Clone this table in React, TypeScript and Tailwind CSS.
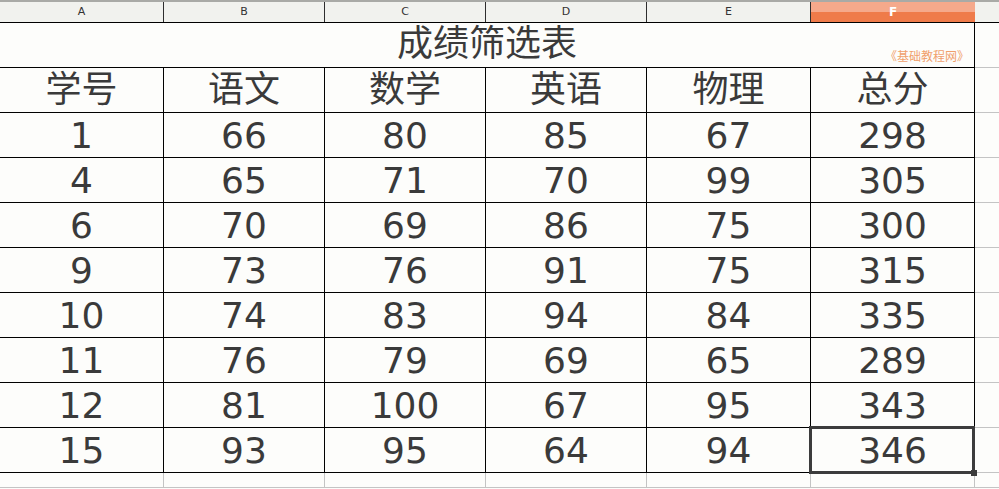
import React from "react";

const cols = ["A", "B", "C", "D", "E", "F"];
const widths = ["w-[164px]", "w-[161px]", "w-[161px]", "w-[161px]", "w-[164px]", "w-[164px]"];
const header = ["学号", "语文", "数学", "英语", "物理", "总分"];
const data = [
  [1, 66, 80, 85, 67, 298],
  [4, 65, 71, 70, 99, 305],
  [6, 70, 69, 86, 75, 300],
  [9, 73, 76, 91, 75, 315],
  [10, 74, 83, 94, 84, 335],
  [11, 76, 79, 69, 65, 289],
  [12, 81, 100, 67, 95, 343],
  [15, 93, 95, 64, 94, 346],
];

const font = { fontFamily: '"DejaVu Sans", "Noto Sans CJK SC", sans-serif' };

export default function App() {
  return (
    <div className="w-[999px] h-[489px] overflow-hidden bg-[#fdfdfb] text-[#3a3a3a]" style={font}>
      {/* top gray line */}
      <div className="h-[2px] bg-[#a9aaa6]" />
      {/* column headers */}
      <div className="flex h-[21px] bg-[#f1f2ee] border-b border-black">
        {cols.map((c, i) =>
          c === "F" ? (
            <div key={c} className={`${widths[i]} h-[20px] flex flex-col relative`}>
              <div className="h-[10px] bg-[#f5a98b]" />
              <div className="h-[10px] bg-[#ef7b4a]" />
              <div className="absolute inset-0 flex items-center justify-center text-white text-[12px] font-bold">F</div>
            </div>
          ) : (
            <div key={c} className={`${widths[i]} h-[20px] border-r border-[#2e2e2e] flex items-center justify-center text-[11px] text-[#333]`}>
              {c}
            </div>
          )
        )}
        <div className="flex-1" />
      </div>
      {/* title row */}
      <div className="flex h-[45px]">
        <div className="w-[975px] h-[45px] border-r border-b border-black relative flex items-center justify-center text-[36px] leading-none">
          <span className="relative left-[0px] top-[-1px]">成绩筛选表</span>
          <span className="absolute right-[5px] top-[28px] text-[12px] leading-none text-[#f0a06c]">《基础教程网》</span>
        </div>
        <div className="flex-1 border-b border-[#c4c4c4]" />
      </div>
      {/* header row */}
      <div className="flex h-[45px]">
        {header.map((h, i) => (
          <div key={h} className={`${widths[i]} h-[45px] border-r border-b border-black flex items-center justify-center text-[36px] leading-none`}>
            {h}
          </div>
        ))}
        <div className="flex-1 border-b border-[#c4c4c4]" />
      </div>
      {data.map((row, r) => (
        <div key={r} className="flex h-[45px]">
          {row.map((v, i) => (
            <div key={i} className={`${widths[i]} h-[45px] border-r border-b border-black flex items-center justify-center text-[36px] leading-none relative`}>
              <span className="relative top-[1px]">{v}</span>
              {r === data.length - 1 && i === 5 && (
                <>
                  <div className="absolute left-[-2px] top-[-2px] w-[166px] h-[48px] border-[3px] border-[#3c3c3c]" />
                  <div className="absolute right-[-3px] bottom-[-4px] w-[6px] h-[6px] bg-[#3c3c3c]" />
                </>
              )}
            </div>
          ))}
          <div className="flex-1 border-b border-[#c4c4c4]" />
        </div>
      ))}
      {/* empty row */}
      <div className="flex h-[15px]">
        {widths.map((w, i) => (
          <div key={i} className={`${w} h-[15px] border-r border-b border-[#c4c4c4]`} />
        ))}
        <div className="flex-1 border-b border-[#c4c4c4]" />
      </div>
    </div>
  );
}
